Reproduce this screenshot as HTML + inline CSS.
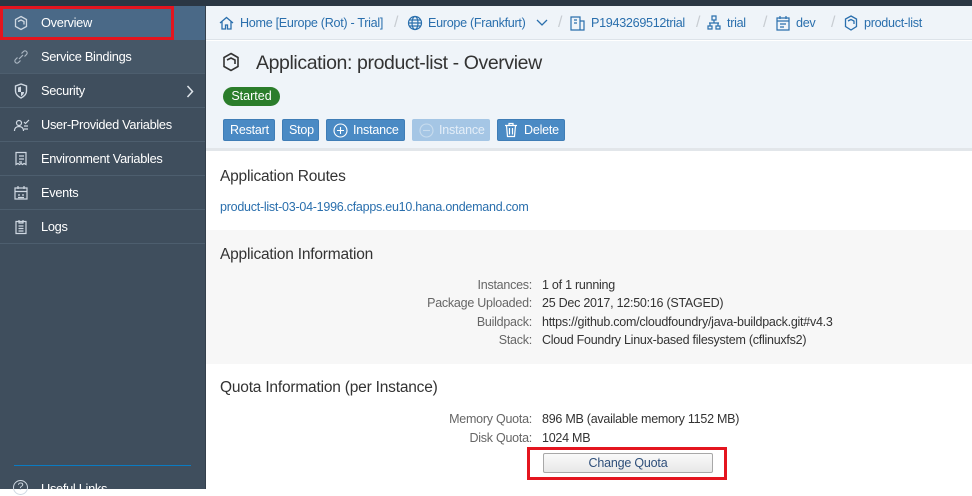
<!DOCTYPE html>
<html><head><meta charset="utf-8"><style>
*{margin:0;padding:0;box-sizing:border-box}
body{width:972px;height:489px;overflow:hidden;font-family:"Liberation Sans",Arial,sans-serif;background:#fff;position:relative}
.top{position:absolute;left:0;top:0;width:972px;height:6px;background:#2b3744}
.side{position:absolute;left:0;top:6px;width:206px;height:483px;background:#3f4e5d;border-right:1px solid #34404c}
.row{position:absolute;left:0;width:205px;height:34px;border-bottom:1px solid #4d5e6e;color:#fff;font-size:12.8px;letter-spacing:-0.3px;line-height:33px;padding-left:41px}
.row svg{position:absolute;left:13px;top:9px}
.main{position:absolute;left:206px;top:6px;width:766px;height:483px}
.bc{position:absolute;left:0;top:0;width:766px;height:34px;background:#eff4f9;border-bottom:1px solid #dde3e9;font-size:12.6px;letter-spacing:-0.3px;color:#2a6fad}
.bc span{position:absolute;top:10px;white-space:nowrap}
.sep{color:#c8cdd2}
.hdr{position:absolute;left:0;top:35px;width:766px;height:110px;background:#eff4f9;border-bottom:3px solid #e2e6ea}
.btn{position:absolute;top:78px;height:22px;background:#4a8ac4;border:1px solid #3f7db6;border-radius:2px;color:#fff;font-size:12.5px;letter-spacing:-0.2px;line-height:20px;padding:0 6px;white-space:nowrap}
.sec{position:absolute;left:0;width:766px}
h2{position:absolute;left:14px;font-weight:normal;font-size:15.5px;letter-spacing:-0.2px;color:#333}
.lab{position:absolute;right:440px;width:200px;text-align:right;font-size:12.5px;letter-spacing:-0.25px;color:#666}
.val{position:absolute;left:336px;font-size:12.5px;letter-spacing:-0.25px;color:#333;white-space:nowrap}
</style></head><body>
<div class="top"></div>
<div class="side">
 <div class="row" style="top:0;background:#4a6987;border-bottom:1px solid #4a6987"><svg width="16" height="16" viewBox="0 0 16 16" fill="none" stroke="#cfd8e2" stroke-width="1.3"><path d="M8 1.5l5.5 3v7L8 14.5 2.5 11.5v-7z"/><path d="M5 6.5l3-1.5 3 1.5v3"/></svg>Overview</div>
 <div style="position:absolute;left:0;top:0;width:174px;height:34px;border:3px solid #e4151f"></div>
 <div class="row" style="top:34px;background:#465767"><svg width="16" height="16" viewBox="0 0 16 16" fill="none" stroke="#aab6c2" stroke-width="1.2"><path d="M6 10l4-4M4.5 8.5l-2 2a2 2 0 003 3l2-2M11.5 7.5l2-2a2 2 0 00-3-3l-2 2"/></svg>Service Bindings</div>
 <div class="row" style="top:68px"><svg width="16" height="16" viewBox="0 0 16 16"><path d="M8 1L2.5 3v5c0 3.5 2.5 5.5 5.5 7 3-1.5 5.5-3.5 5.5-7V3z" fill="none" stroke="#cfd8e2" stroke-width="1.4"/><path d="M8 3.5v5.5H5V4.5zM8 9h3c0 2-1.3 3.3-3 4.2z" fill="#cfd8e2"/></svg>Security<svg style="left:186px;top:11px" width="8" height="13" viewBox="0 0 8 13" fill="none" stroke="#dfe5eb" stroke-width="1.5"><path d="M1.5 1l5 5.5-5 5.5"/></svg></div>
 <div class="row" style="top:102px"><svg width="18" height="16" viewBox="0 0 18 16" fill="none" stroke="#cfd8e2" stroke-width="1.2"><circle cx="6" cy="6" r="2.5"/><path d="M1.5 14c0-3 2-4.5 4.5-4.5S10.5 11 10.5 14M11 9h4M11 12h4M11 5l1.5 1.5L16 3"/></svg>User-Provided Variables</div>
 <div class="row" style="top:136px"><svg width="16" height="16" viewBox="0 0 16 16" fill="none" stroke="#cfd8e2" stroke-width="1.2"><path d="M3 1.5h10v12l-2-1-1.5 1-1.5-1-1.5 1-1.5-1-2 1zM6 5h5M6 8h5M6 11h3"/></svg>Environment Variables</div>
 <div class="row" style="top:170px"><svg width="16" height="16" viewBox="0 0 16 16" fill="none" stroke="#cfd8e2" stroke-width="1.2"><path d="M2 3h12v11H2zM2 6.5h12M5 1v3M11 1v3M5 10h2M9 10h2M5 12.5h6"/></svg>Events</div>
 <div class="row" style="top:204px"><svg width="16" height="16" viewBox="0 0 16 16" fill="none" stroke="#cfd8e2" stroke-width="1.2"><path d="M3 2.5h10v12H3zM6 1v3h4V1M5.5 7h5M5.5 9.5h5M5.5 12h5"/></svg>Logs</div>
 <div style="position:absolute;left:14px;top:459px;width:177px;height:1px;background:#0a7bc2"></div>
 <div style="position:absolute;left:13px;top:474px;width:15px;height:15px;border:1.3px solid #cfd8e2;border-radius:50%;color:#cfd8e2;font-size:11px;text-align:center;line-height:13px">?</div>
 <div style="position:absolute;left:41px;top:475px;color:#fff;font-size:12.8px;letter-spacing:-0.3px">Useful Links</div>
</div>
<div class="main">
 <div class="bc">
  <svg style="position:absolute;left:13px;top:10px" width="15" height="14" viewBox="0 0 15 14" fill="none" stroke="#2a6fad" stroke-width="1.3"><path d="M1 7L7.5 1.5 14 7M3 5.5V13h3.5V9h2v4H12V5.5"/></svg>
  <span style="left:34px">Home [Europe (Rot) - Trial]</span><span class="sep" style="left:188px;font-size:16px;top:8px">/</span>
  <svg style="position:absolute;left:201px;top:9px" width="16" height="16" viewBox="0 0 16 16" fill="none" stroke="#2a6fad" stroke-width="1.2"><circle cx="8" cy="8" r="6.5"/><ellipse cx="8" cy="8" rx="3" ry="6.5"/><path d="M1.5 8h13M2.5 5h11M2.5 11h11"/></svg>
  <span style="left:222px">Europe (Frankfurt)</span>
  <svg style="position:absolute;left:330px;top:13px" width="12" height="8" viewBox="0 0 12 8" fill="none" stroke="#2a6fad" stroke-width="1.3"><path d="M1 1l5 5 5-5"/></svg>
  <span class="sep" style="left:352px;font-size:16px;top:8px">/</span>
  <svg style="position:absolute;left:364px;top:9px" width="15" height="16" viewBox="0 0 15 16" fill="none" stroke="#2a6fad" stroke-width="1.2"><path d="M1 2h9v13H1zM10 6h4v9h-4M4 5h3M4 8h3"/></svg>
  <span style="left:385px">P1943269512trial</span><span class="sep" style="left:490px;font-size:16px;top:8px">/</span>
  <svg style="position:absolute;left:501px;top:9px" width="14" height="15" viewBox="0 0 14 15" fill="none" stroke="#2a6fad" stroke-width="1.2"><path d="M5 1h4v4H5zM7 5v3M2 8h10M1 11h4v3H1zM9 11h4v3H9zM3 8v3M11 8v3"/></svg>
  <span style="left:521px">trial</span><span class="sep" style="left:557px;font-size:16px;top:8px">/</span>
  <svg style="position:absolute;left:570px;top:9px" width="14" height="16" viewBox="0 0 14 16" fill="none" stroke="#2a6fad" stroke-width="1.2"><path d="M1 3h12v12H1zM1 6h12M4 1v3M10 1v3M4 9h6M4 12h4"/></svg>
  <span style="left:590px">dev</span><span class="sep" style="left:625px;font-size:16px;top:8px">/</span>
  <svg style="position:absolute;left:638px;top:9px" width="14" height="16" viewBox="0 0 14 16" fill="none" stroke="#2a6fad" stroke-width="1.3"><path d="M7 1l5.5 3v7.5L7 15 1.5 11.5V4z"/><path d="M4 6l3-1.5 3 1.5v3"/></svg>
  <span style="left:658px">product-list</span>
 </div>
 <div class="hdr">
  <svg style="position:absolute;left:16px;top:11px" width="18" height="20" viewBox="0 0 18 20" fill="none" stroke="#333" stroke-width="1.6"><path d="M9 1.5l7 4v9l-7 4-7-4v-9z"/><path d="M5 8l4-2 4 2v4"/></svg>
  <div style="position:absolute;left:50px;top:11px;font-size:19.5px;letter-spacing:-0.4px;color:#333">Application: product-list - Overview</div>
  <div style="position:absolute;left:17px;top:46px;width:57px;height:19px;background:#2b7d2b;border-radius:10px;color:#fff;font-size:12.5px;text-align:center;line-height:19px">Started</div>
  <div class="btn" style="left:17px;width:52px">Restart</div>
  <div class="btn" style="left:76px;width:37px">Stop</div>
  <div class="btn" style="left:120px;width:79px;padding-left:26px"><svg style="position:absolute;left:6px;top:3px" width="15" height="15" viewBox="0 0 15 15" fill="none" stroke="#fff" stroke-width="1.1"><circle cx="7.5" cy="7.5" r="6.5"/><path d="M7.5 4v7M4 7.5h7"/></svg>Instance</div>
  <div class="btn" style="left:206px;width:78px;padding-left:26px;background:#a5c6e5;border-color:#a5c6e5;color:#e4eef8"><svg style="position:absolute;left:6px;top:3px" width="15" height="15" viewBox="0 0 15 15" fill="none" stroke="#c8dcee" stroke-width="1.1"><circle cx="7.5" cy="7.5" r="6.5"/><path d="M4 7.5h7"/></svg>Instance</div>
  <div class="btn" style="left:291px;width:68px;padding-left:26px"><svg style="position:absolute;left:6px;top:2px" width="14" height="16" viewBox="0 0 14 16" fill="none" stroke="#fff" stroke-width="1.2"><path d="M1 3.5h12M5 3.5V1.5h4v2M2.5 3.5l1 11h7l1-11M5.5 6v6.5M8.5 6v6.5"/></svg>Delete</div>
 </div>
 <div class="sec" style="top:145px;height:79px;background:#fff">
  <h2 style="top:17px">Application Routes</h2>
  <div style="position:absolute;left:14px;top:49px;font-size:12.5px;letter-spacing:-0.25px;color:#2a6fad">product-list-03-04-1996.cfapps.eu10.hana.ondemand.com</div>
 </div>
 <div class="sec" style="top:224px;height:134px;background:#f7f7f7">
  <h2 style="top:16px">Application Information</h2>
  <div class="lab" style="top:48px">Instances:</div><div class="val" style="top:48px">1 of 1 running</div>
  <div class="lab" style="top:66px">Package Uploaded:</div><div class="val" style="top:66px">25 Dec 2017, 12:50:16 (STAGED)</div>
  <div class="lab" style="top:85px">Buildpack:</div><div class="val" style="top:85px">https://github.com/cloudfoundry/java-buildpack.git#v4.3</div>
  <div class="lab" style="top:103px">Stack:</div><div class="val" style="top:103px">Cloud Foundry Linux-based filesystem (cflinuxfs2)</div>
 </div>
 <div class="sec" style="top:358px;height:125px;background:#fff">
  <h2 style="top:15px">Quota Information (per Instance)</h2>
  <div class="lab" style="top:48px">Memory Quota:</div><div class="val" style="top:48px">896 MB (available memory 1152 MB)</div>
  <div class="lab" style="top:67px">Disk Quota:</div><div class="val" style="top:67px">1024 MB</div>
  <div style="position:absolute;left:321px;top:83px;width:200px;height:33px;border:3px solid #e4151f"></div>
  <div style="position:absolute;left:337px;top:89px;width:170px;height:20px;background:linear-gradient(#fafafa,#e8e8e8);border:1px solid #a8a8a8;border-radius:2px;text-align:center;font-size:12.5px;letter-spacing:-0.2px;line-height:18px;color:#2f4f7a">Change Quota</div>
 </div>
</div>
</body></html>
